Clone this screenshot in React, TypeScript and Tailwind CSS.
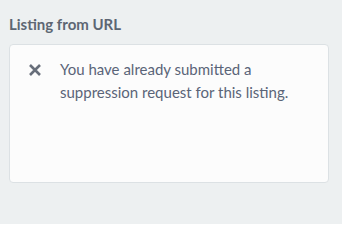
import React from "react";

const CloseIcon: React.FC = () => (
  <svg width="14" height="14" viewBox="0 0 14 14" className="shrink-0">
    <path d="M2 2 L12 12 M12 2 L2 12" stroke="#676e7a" strokeWidth="2.6" strokeLinecap="butt" />
  </svg>
);

const App: React.FC = () => {
  return (
    <div
      className="w-[342px] h-[224px] bg-[#edf0f1] px-[9px] pt-[14px]"
      style={{ fontFamily: "Lato, 'Open Sans', sans-serif" }}
    >
      {/* Heading */}
      <h2 className="text-[15px] font-bold leading-[20px] text-[#5d6673]">Listing from URL</h2>

      {/* Message card */}
      <div className="mt-[10px] h-[139px] w-[320px] rounded-[4px] border border-[#dce1e4] bg-[#fcfcfc] pl-[18px] pr-4 pt-[13px]">
        <div className="flex flex-row items-start gap-[18px]">
          <div className="pt-[5px]">
            <CloseIcon />
          </div>
          <p className="text-[15px] leading-[23px] text-[#5a6478]">
            You have already submitted a suppression request for this listing.
          </p>
        </div>
      </div>
    </div>
  );
};

export default App;
